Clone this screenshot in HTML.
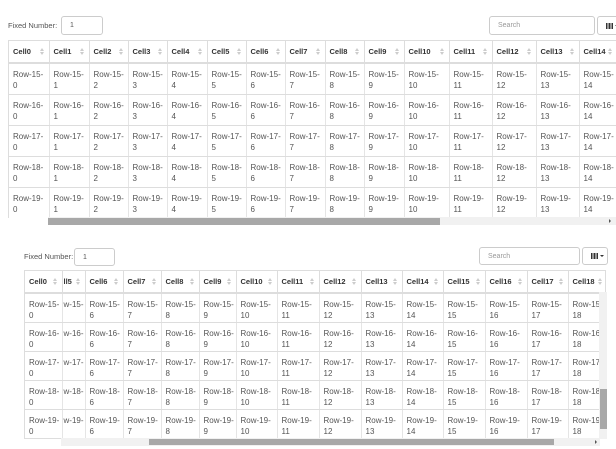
<!DOCTYPE html>
<html><head><meta charset="utf-8"><style>
*{box-sizing:border-box;margin:0;padding:0}
body{width:616px;height:449px;overflow:hidden;background:#fff;font-family:"Liberation Sans",Arial,sans-serif;color:#555;position:relative}
.abs{position:absolute}
.lbl{font-size:7.5px;color:#555}
.inp{border:1px solid #ccc;border-radius:3px;background:#fff;font-size:7px;color:#555;padding:0 0 0 8px;display:flex;align-items:center}
.srch{color:#999}
.btn{border:1px solid #ccc;border-radius:3px;background:#fff;display:flex;align-items:center;padding-left:8px}
.bars{display:inline-block;width:7px;height:6px;background:repeating-linear-gradient(90deg,#333 0 1.6px,transparent 1.6px 2.7px)}
.car{display:inline-block;margin-left:2px;border-left:2px solid transparent;border-right:2px solid transparent;border-top:2px solid #333}
.wrap{overflow:hidden;border-top:1px solid #ddd;border-left:1px solid #ddd}
table{border-collapse:collapse;table-layout:fixed}
th{height:22px;font-size:7.5px;font-weight:bold;color:#333;text-align:left;padding-left:4px;border-right:1px solid #ddd;border-bottom:2px solid #ddd;position:relative;white-space:nowrap;overflow:hidden}
th:after{content:"";position:absolute;right:5px;top:7px;width:0;height:0;border-left:2px solid transparent;border-right:2px solid transparent;border-bottom:3px solid #ccc}
th:before{content:"";position:absolute;right:5px;top:11px;width:0;height:0;border-left:2px solid transparent;border-right:2px solid transparent;border-top:3px solid #ccc}
td{font-size:8px;line-height:11px;vertical-align:top;padding:5px 0 0 4px;border-right:1px solid #e5e5e5;border-bottom:1px solid #ddd;white-space:nowrap;overflow:hidden}
.t1 td{height:31px}
.t2 td{height:29px}
.sb{background:#f1f1f1}
.th{background:#a8a8a8}
</style></head><body>

<div class="abs lbl" style="left:8px;top:21px">Fixed Number:</div>
<div class="abs inp" style="left:61px;top:16px;width:42px;height:19px">1</div>
<div class="abs inp srch" style="left:489px;top:16px;width:106px;height:19px">Search</div>
<div class="abs btn" style="left:597px;top:16px;width:30px;height:19px"><span class="bars"></span><span class="car"></span></div>

<div class="abs wrap" style="left:8px;top:40px;width:608px;height:178px">
<table class="t1" style="width:608px">
<colgroup><col style="width:40px"><col style="width:40px"><col style="width:39px"><col style="width:39px"><col style="width:40px"><col style="width:39px"><col style="width:39px"><col style="width:40px"><col style="width:39px"><col style="width:40px"><col style="width:45px"><col style="width:43px"><col style="width:44px"><col style="width:43px"><col style="width:38px"></colgroup>
<tr><th>Cell0</th><th>Cell1</th><th>Cell2</th><th>Cell3</th><th>Cell4</th><th>Cell5</th><th>Cell6</th><th>Cell7</th><th>Cell8</th><th>Cell9</th><th>Cell10</th><th>Cell11</th><th>Cell12</th><th>Cell13</th><th>Cell14</th></tr>
<tr><td>Row-15-<br>0</td><td>Row-15-<br>1</td><td>Row-15-<br>2</td><td>Row-15-<br>3</td><td>Row-15-<br>4</td><td>Row-15-<br>5</td><td>Row-15-<br>6</td><td>Row-15-<br>7</td><td>Row-15-<br>8</td><td>Row-15-<br>9</td><td>Row-15-<br>10</td><td>Row-15-<br>11</td><td>Row-15-<br>12</td><td>Row-15-<br>13</td><td>Row-15-<br>14</td></tr>
<tr><td>Row-16-<br>0</td><td>Row-16-<br>1</td><td>Row-16-<br>2</td><td>Row-16-<br>3</td><td>Row-16-<br>4</td><td>Row-16-<br>5</td><td>Row-16-<br>6</td><td>Row-16-<br>7</td><td>Row-16-<br>8</td><td>Row-16-<br>9</td><td>Row-16-<br>10</td><td>Row-16-<br>11</td><td>Row-16-<br>12</td><td>Row-16-<br>13</td><td>Row-16-<br>14</td></tr>
<tr><td>Row-17-<br>0</td><td>Row-17-<br>1</td><td>Row-17-<br>2</td><td>Row-17-<br>3</td><td>Row-17-<br>4</td><td>Row-17-<br>5</td><td>Row-17-<br>6</td><td>Row-17-<br>7</td><td>Row-17-<br>8</td><td>Row-17-<br>9</td><td>Row-17-<br>10</td><td>Row-17-<br>11</td><td>Row-17-<br>12</td><td>Row-17-<br>13</td><td>Row-17-<br>14</td></tr>
<tr><td>Row-18-<br>0</td><td>Row-18-<br>1</td><td>Row-18-<br>2</td><td>Row-18-<br>3</td><td>Row-18-<br>4</td><td>Row-18-<br>5</td><td>Row-18-<br>6</td><td>Row-18-<br>7</td><td>Row-18-<br>8</td><td>Row-18-<br>9</td><td>Row-18-<br>10</td><td>Row-18-<br>11</td><td>Row-18-<br>12</td><td>Row-18-<br>13</td><td>Row-18-<br>14</td></tr>
<tr><td>Row-19-<br>0</td><td>Row-19-<br>1</td><td>Row-19-<br>2</td><td>Row-19-<br>3</td><td>Row-19-<br>4</td><td>Row-19-<br>5</td><td>Row-19-<br>6</td><td>Row-19-<br>7</td><td>Row-19-<br>8</td><td>Row-19-<br>9</td><td>Row-19-<br>10</td><td>Row-19-<br>11</td><td>Row-19-<br>12</td><td>Row-19-<br>13</td><td>Row-19-<br>14</td></tr>
</table></div>
<div class="abs sb" style="left:48px;top:217px;width:568px;height:8px"></div>
<div class="abs th" style="left:48px;top:218px;width:392px;height:7px"></div>
<div class="abs" style="left:609px;top:219px;border-top:2px solid transparent;border-bottom:2px solid transparent;border-left:2px solid #555"></div>

<div class="abs lbl" style="left:24px;top:252px">Fixed Number:</div>
<div class="abs inp" style="left:74px;top:248px;width:41px;height:18px">1</div>
<div class="abs inp srch" style="left:479px;top:247px;width:101px;height:18px">Search</div>
<div class="abs btn" style="left:582px;top:247px;width:26px;height:18px"><span class="bars"></span><span class="car"></span></div>

<div class="abs wrap" style="left:24px;top:270px;width:582px;height:169px">
<table class="t2" style="width:582px">
<colgroup><col style="width:37px"><col style="width:23px"><col style="width:38px"><col style="width:38px"><col style="width:38px"><col style="width:37px"><col style="width:41px"><col style="width:42px"><col style="width:42px"><col style="width:41px"><col style="width:41px"><col style="width:42px"><col style="width:42px"><col style="width:41px"><col style="width:39px"></colgroup>
<tr><th>Cell0</th><th style="padding-left:1px">ll5</th><th>Cell6</th><th>Cell7</th><th>Cell8</th><th>Cell9</th><th>Cell10</th><th>Cell11</th><th>Cell12</th><th>Cell13</th><th>Cell14</th><th>Cell15</th><th>Cell16</th><th>Cell17</th><th style="border-right:none">Cell18</th></tr>
<tr><td>Row-15-<br>0</td><td style="padding-left:1px">w-15-</td><td>Row-15-<br>6</td><td>Row-15-<br>7</td><td>Row-15-<br>8</td><td>Row-15-<br>9</td><td>Row-15-<br>10</td><td>Row-15-<br>11</td><td>Row-15-<br>12</td><td>Row-15-<br>13</td><td>Row-15-<br>14</td><td>Row-15-<br>15</td><td>Row-15-<br>16</td><td>Row-15-<br>17</td><td>Row-15-<br>18</td></tr>
<tr><td>Row-16-<br>0</td><td style="padding-left:1px">w-16-</td><td>Row-16-<br>6</td><td>Row-16-<br>7</td><td>Row-16-<br>8</td><td>Row-16-<br>9</td><td>Row-16-<br>10</td><td>Row-16-<br>11</td><td>Row-16-<br>12</td><td>Row-16-<br>13</td><td>Row-16-<br>14</td><td>Row-16-<br>15</td><td>Row-16-<br>16</td><td>Row-16-<br>17</td><td>Row-16-<br>18</td></tr>
<tr><td>Row-17-<br>0</td><td style="padding-left:1px">w-17-</td><td>Row-17-<br>6</td><td>Row-17-<br>7</td><td>Row-17-<br>8</td><td>Row-17-<br>9</td><td>Row-17-<br>10</td><td>Row-17-<br>11</td><td>Row-17-<br>12</td><td>Row-17-<br>13</td><td>Row-17-<br>14</td><td>Row-17-<br>15</td><td>Row-17-<br>16</td><td>Row-17-<br>17</td><td>Row-17-<br>18</td></tr>
<tr><td>Row-18-<br>0</td><td style="padding-left:1px">w-18-</td><td>Row-18-<br>6</td><td>Row-18-<br>7</td><td>Row-18-<br>8</td><td>Row-18-<br>9</td><td>Row-18-<br>10</td><td>Row-18-<br>11</td><td>Row-18-<br>12</td><td>Row-18-<br>13</td><td>Row-18-<br>14</td><td>Row-18-<br>15</td><td>Row-18-<br>16</td><td>Row-18-<br>17</td><td>Row-18-<br>18</td></tr>
<tr><td>Row-19-<br>0</td><td style="padding-left:1px">w-19-</td><td>Row-19-<br>6</td><td>Row-19-<br>7</td><td>Row-19-<br>8</td><td>Row-19-<br>9</td><td>Row-19-<br>10</td><td>Row-19-<br>11</td><td>Row-19-<br>12</td><td>Row-19-<br>13</td><td>Row-19-<br>14</td><td>Row-19-<br>15</td><td>Row-19-<br>16</td><td>Row-19-<br>17</td><td>Row-19-<br>18</td></tr>
</table></div>
<div class="abs" style="left:605px;top:270px;width:1px;height:22px;background:#ddd"></div>
<div class="abs sb" style="left:599px;top:292px;width:8px;height:147px"></div>
<div class="abs th" style="left:600px;top:389px;width:7px;height:40px"></div>
<div class="abs sb" style="left:61px;top:438px;width:539px;height:8px"></div>
<div class="abs th" style="left:149px;top:439px;width:405px;height:6px"></div>
<div class="abs" style="left:595px;top:440px;border-top:2px solid transparent;border-bottom:2px solid transparent;border-left:2px solid #555"></div>
</body></html>
